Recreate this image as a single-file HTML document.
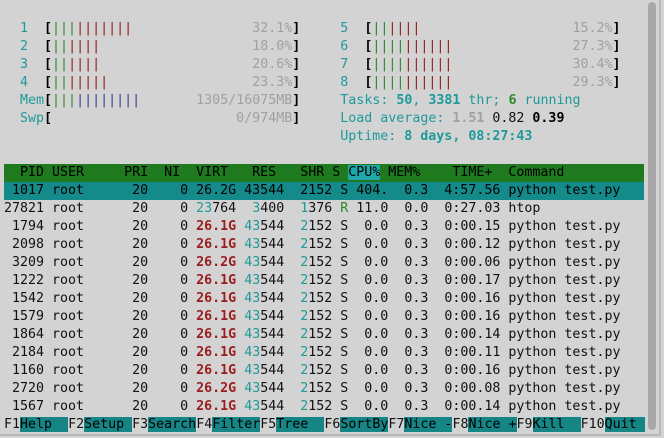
<!DOCTYPE html>
<html><head><meta charset="utf-8"><style>
html,body{margin:0;padding:0;}
body{width:664px;height:438px;background:#d3d3d3;position:relative;overflow:hidden;font-family:"DejaVu Sans Mono","Liberation Mono",monospace;font-size:13.3px;color:#111;}
#w{position:absolute;left:0;top:2px;width:664px;height:436px;}
.l{position:absolute;left:4px;width:640px;height:18px;line-height:18px;white-space:pre;}
.t{color:#1e9a9a}.tb{color:#1e9a9a;font-weight:bold}
.g{color:#2a8a2a}.r{color:#8e1b1b}.b{color:#3a3a90}
.gr{color:#a0a0a0}.k{font-weight:bold;color:#000}
.rv{color:#9a1c1c;font-weight:bold}
.c{color:#1e9a9a}
.hd{background:#1f7a1f;color:#000}
.sel{background:#158a8a;color:#000}
.cpu{background:#1ea8a8}
.fk{background:#158585;color:#000}
.gb{color:#2a8a2a;font-weight:bold}
#sb{position:absolute;left:648px;top:2px;width:8px;height:428px;background:#a8a8a8;border-radius:4px;}
#edge{position:absolute;left:659px;top:0;width:2px;height:436px;background:#b8b8b8}
#bot{position:absolute;left:0;top:434px;width:661px;height:2px;background:#b8b8b8}
</style></head><body>
<div id="sb"></div><div id="edge"></div><div id="bot"></div>
<div id="w">
<div class="l" style="top:18px"><span class="t">  1  </span><span class="k">[</span><span class="g">|||</span><span class="r">|||||||</span>               <span class="gr">32.1%</span><span class="k">]</span>     <span class="t">5  </span><span class="k">[</span><span class="g">||</span><span class="r">||||</span>                   <span class="gr">15.2%</span><span class="k">]</span></div>
<div class="l" style="top:36px"><span class="t">  2  </span><span class="k">[</span><span class="g">||</span><span class="r">||||</span>                   <span class="gr">18.0%</span><span class="k">]</span>     <span class="t">6  </span><span class="k">[</span><span class="g">||||</span><span class="r">||||||</span>               <span class="gr">27.3%</span><span class="k">]</span></div>
<div class="l" style="top:54px"><span class="t">  3  </span><span class="k">[</span><span class="g">||</span><span class="r">||||</span>                   <span class="gr">20.6%</span><span class="k">]</span>     <span class="t">7  </span><span class="k">[</span><span class="g">||||</span><span class="r">||||||</span>               <span class="gr">30.4%</span><span class="k">]</span></div>
<div class="l" style="top:72px"><span class="t">  4  </span><span class="k">[</span><span class="g">||</span><span class="r">|||||</span>                  <span class="gr">23.3%</span><span class="k">]</span>     <span class="t">8  </span><span class="k">[</span><span class="g">||||</span><span class="r">||||||</span>               <span class="gr">29.3%</span><span class="k">]</span></div>
<div class="l" style="top:90px"><span class="t">  Mem</span><span class="k">[</span><span class="g">|||</span><span class="b">||||||||</span>       <span class="gr">1305/16075MB</span><span class="k">]</span>     <span class="t">Tasks: </span><span class="tb">50</span><span class="t">, </span><span class="tb">3381</span><span class="t"> thr; </span><span class="gb">6</span><span class="t"> running</span></div>
<div class="l" style="top:108px"><span class="t">  Swp</span><span class="k">[</span>                       <span class="gr">0/974MB</span><span class="k">]</span>     <span class="t">Load average: </span><span class="gr" style="font-weight:bold">1.51</span> 0.82 <span class="k">0.39</span></div>
<div class="l" style="top:126px">                                          <span class="t">Uptime: </span><span class="tb">8 days, 08:27:43</span></div>

<div class="l hd" style="top:162px">  PID USER     PRI  NI  VIRT   RES   SHR S <span class="cpu">CPU%</span> MEM%    TIME+  Command</div>
<div class="l sel" style="top:180px"> 1017 root      20    0 26.2G 43544  2152 S 404.  0.3  4:57.56 python test.py</div>
<div class="l" style="top:198px">27821 root      20    0 <span class="c">23</span>764  <span class="c">3</span>400  <span class="c">1</span>376 <span class="g">R</span> 11.0  0.0  0:27.03 htop</div>
<div class="l" style="top:216px"> 1794 root      20    0 <span class="rv">26.1G</span> <span class="c">43</span>544  <span class="c">2</span>152 S  0.0  0.3  0:00.15 python test.py</div>
<div class="l" style="top:234px"> 2098 root      20    0 <span class="rv">26.1G</span> <span class="c">43</span>544  <span class="c">2</span>152 S  0.0  0.3  0:00.12 python test.py</div>
<div class="l" style="top:252px"> 3209 root      20    0 <span class="rv">26.2G</span> <span class="c">43</span>544  <span class="c">2</span>152 S  0.0  0.3  0:00.06 python test.py</div>
<div class="l" style="top:270px"> 1222 root      20    0 <span class="rv">26.1G</span> <span class="c">43</span>544  <span class="c">2</span>152 S  0.0  0.3  0:00.17 python test.py</div>
<div class="l" style="top:288px"> 1542 root      20    0 <span class="rv">26.1G</span> <span class="c">43</span>544  <span class="c">2</span>152 S  0.0  0.3  0:00.16 python test.py</div>
<div class="l" style="top:306px"> 1579 root      20    0 <span class="rv">26.1G</span> <span class="c">43</span>544  <span class="c">2</span>152 S  0.0  0.3  0:00.16 python test.py</div>
<div class="l" style="top:324px"> 1864 root      20    0 <span class="rv">26.1G</span> <span class="c">43</span>544  <span class="c">2</span>152 S  0.0  0.3  0:00.14 python test.py</div>
<div class="l" style="top:342px"> 2184 root      20    0 <span class="rv">26.1G</span> <span class="c">43</span>544  <span class="c">2</span>152 S  0.0  0.3  0:00.11 python test.py</div>
<div class="l" style="top:360px"> 1160 root      20    0 <span class="rv">26.1G</span> <span class="c">43</span>544  <span class="c">2</span>152 S  0.0  0.3  0:00.16 python test.py</div>
<div class="l" style="top:378px"> 2720 root      20    0 <span class="rv">26.2G</span> <span class="c">43</span>544  <span class="c">2</span>152 S  0.0  0.3  0:00.08 python test.py</div>
<div class="l" style="top:396px"> 1567 root      20    0 <span class="rv">26.1G</span> <span class="c">43</span>544  <span class="c">2</span>152 S  0.0  0.3  0:00.14 python test.py</div>

<div class="l" style="top:414px">F1<span class="fk">Help  </span>F2<span class="fk">Setup </span>F3<span class="fk">Search</span>F4<span class="fk">Filter</span>F5<span class="fk">Tree  </span>F6<span class="fk">SortBy</span>F7<span class="fk">Nice -</span>F8<span class="fk">Nice +</span>F9<span class="fk">Kill  </span>F10<span class="fk">Quit </span></div>
</div>
</body></html>
